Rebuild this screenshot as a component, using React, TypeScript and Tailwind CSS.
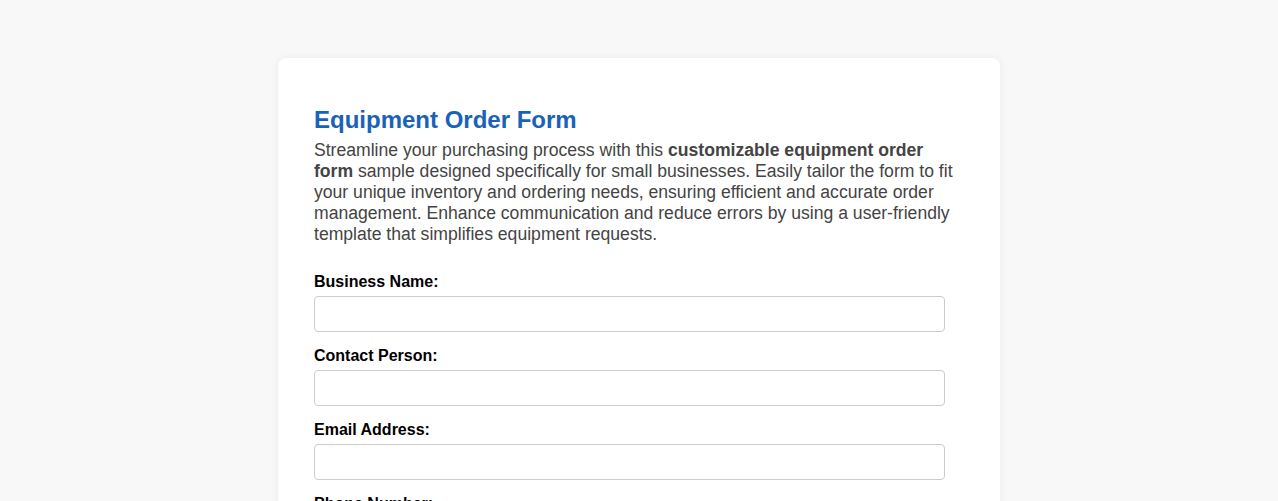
import React from "react";

const fields = [
  { id: "business", label: "Business Name:", type: "text" },
  { id: "contact", label: "Contact Person:", type: "text" },
  { id: "email", label: "Email Address:", type: "email" },
  { id: "phone", label: "Phone Number:", type: "tel" },
  { id: "address", label: "Shipping Address:", type: "text" },
];

export default function App() {
  return (
    <div className="min-h-screen bg-[#f8f8f8] pt-[58px] font-['Liberation_Sans',Arial,sans-serif]">
      <div className="mx-auto w-[722px] rounded-lg bg-white px-9 pt-[48px] pb-10 shadow-[0_0_10px_rgba(0,0,0,0.06)]">
        <h1 className="mb-[6px] text-[24px] font-bold leading-[28px] text-[#1a62b8]">
          Equipment Order Form
        </h1>
        <p className="text-[17.6px] leading-[21px] text-[#444]">
          Streamline your purchasing process with this{" "}
          <strong className="font-bold">customizable equipment order form</strong> sample designed
          specifically for small businesses. Easily tailor the form to fit your unique inventory and
          ordering needs, ensuring efficient and accurate order management. Enhance communication and
          reduce errors by using a user-friendly template that simplifies equipment requests.
        </p>

        <form className="mt-[28px] flex flex-col gap-[15px]">
          {fields.map((f) => (
            <div key={f.id} className="flex flex-col gap-[5px]">
              <label htmlFor={f.id} className="text-[16px] font-bold leading-[18px] text-black">
                {f.label}
              </label>
              <input
                id={f.id}
                type={f.type}
                className="h-9 w-[631px] rounded border border-[#ccc] bg-white px-2.5 text-[16px] outline-none"
              />
            </div>
          ))}
        </form>
      </div>
    </div>
  );
}
